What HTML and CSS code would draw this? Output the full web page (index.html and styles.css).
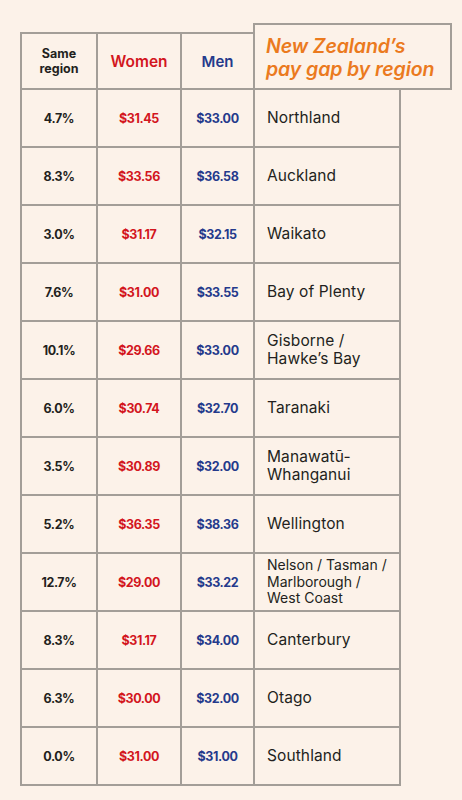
FILE: index.html
```html
<!DOCTYPE html>
<html>
<head>
<meta charset="utf-8">
<link rel="stylesheet" href="styles.css">
</head>
<body>
<div class="page">
  <div class="table">
    <div class="hcell hcell-first same">Same<br>region</div>
    <div class="hcell women">Women</div>
    <div class="hcell men">Men</div>
    <div class="title">New Zealand’s<br>pay gap by region</div>

    <div class="cell first pct">4.7%</div><div class="cell w">$31.45</div><div class="cell m">$33.00</div><div class="cell region">Northland</div>
    <div class="cell first pct">8.3%</div><div class="cell w">$33.56</div><div class="cell m">$36.58</div><div class="cell region">Auckland</div>
    <div class="cell first pct">3.0%</div><div class="cell w">$31.17</div><div class="cell m">$32.15</div><div class="cell region">Waikato</div>
    <div class="cell first pct">7.6%</div><div class="cell w">$31.00</div><div class="cell m">$33.55</div><div class="cell region">Bay of Plenty</div>
    <div class="cell first pct">10.1%</div><div class="cell w">$29.66</div><div class="cell m">$33.00</div><div class="cell region">Gisborne /<br>Hawke’s Bay</div>
    <div class="cell first pct">6.0%</div><div class="cell w">$30.74</div><div class="cell m">$32.70</div><div class="cell region">Taranaki</div>
    <div class="cell first pct">3.5%</div><div class="cell w">$30.89</div><div class="cell m">$32.00</div><div class="cell region">Manawatū-<br>Whanganui</div>
    <div class="cell first pct">5.2%</div><div class="cell w">$36.35</div><div class="cell m">$38.36</div><div class="cell region">Wellington</div>
    <div class="cell first pct">12.7%</div><div class="cell w">$29.00</div><div class="cell m">$33.22</div><div class="cell region small">Nelson / Tasman /<br>Marlborough /<br>West Coast</div>
    <div class="cell first pct">8.3%</div><div class="cell w">$31.17</div><div class="cell m">$34.00</div><div class="cell region">Canterbury</div>
    <div class="cell first pct">6.3%</div><div class="cell w">$30.00</div><div class="cell m">$32.00</div><div class="cell region">Otago</div>
    <div class="cell first pct">0.0%</div><div class="cell w">$31.00</div><div class="cell m">$31.00</div><div class="cell region">Southland</div>
  </div>
</div>
</body>
</html>
```

FILE: styles.css
```css
html, body {
  margin: 0;
  padding: 0;
  background: #fcf2e9;
}
.page {
  width: 462px;
  height: 800px;
  padding: 23px 0 0 20px;
  box-sizing: border-box;
  font-family: "Inter", "Liberation Sans", sans-serif;
  color: #231f20;
}
.table {
  display: grid;
  grid-template-columns: 78px 84px 73px 146px 51px;
  grid-template-rows: 67px repeat(12, 58px);
}
.hcell, .cell {
  box-sizing: border-box;
  border-right: 2px solid #a39e98;
  border-bottom: 2px solid #a39e98;
  display: flex;
  align-items: center;
  justify-content: center;
  text-align: center;
}
.hcell {
  align-self: end;
  height: 58px;
  border-top: 2px solid #a39e98;
  font-weight: 600;
}
.first, .hcell-first {
  border-left: 2px solid #a39e98;
}
.same {
  font-size: 12.5px;
  line-height: 15px;
  font-weight: 700;
}
.women {
  color: #d3161e;
  font-size: 15.5px;
}
.men {
  color: #243a8c;
  font-size: 15px;
}
.title {
  grid-column: 4 / 6;
  margin-left: -2px;
  box-sizing: border-box;
  border: 2px solid #a39e98;
  color: #eb7a1e;
  font-style: italic;
  font-weight: 600;
  font-size: 19.5px;
  line-height: 23px;
  letter-spacing: -0.1px;
  padding: 3px 0 0 11px;
  display: flex;
  align-items: center;
}
.cell {
  font-size: 12.5px;
  font-weight: 700;
  letter-spacing: -0.4px;
}
.first { grid-column: 1; }
.w { grid-column: 2; color: #d3161e; }
.m { grid-column: 3; color: #243a8c; }
.pct {
  font-weight: 700;
  font-size: 12.5px;
}
.region {
  grid-column: 4;
  justify-content: flex-start;
  text-align: left;
  padding: 0 0 0 12px;
  font-size: 15.5px;
  line-height: 18.5px;
  font-weight: 400;
  letter-spacing: 0.1px;
}
.region.small {
  font-size: 14px;
  line-height: 16.5px;
  letter-spacing: 0;
}
```
